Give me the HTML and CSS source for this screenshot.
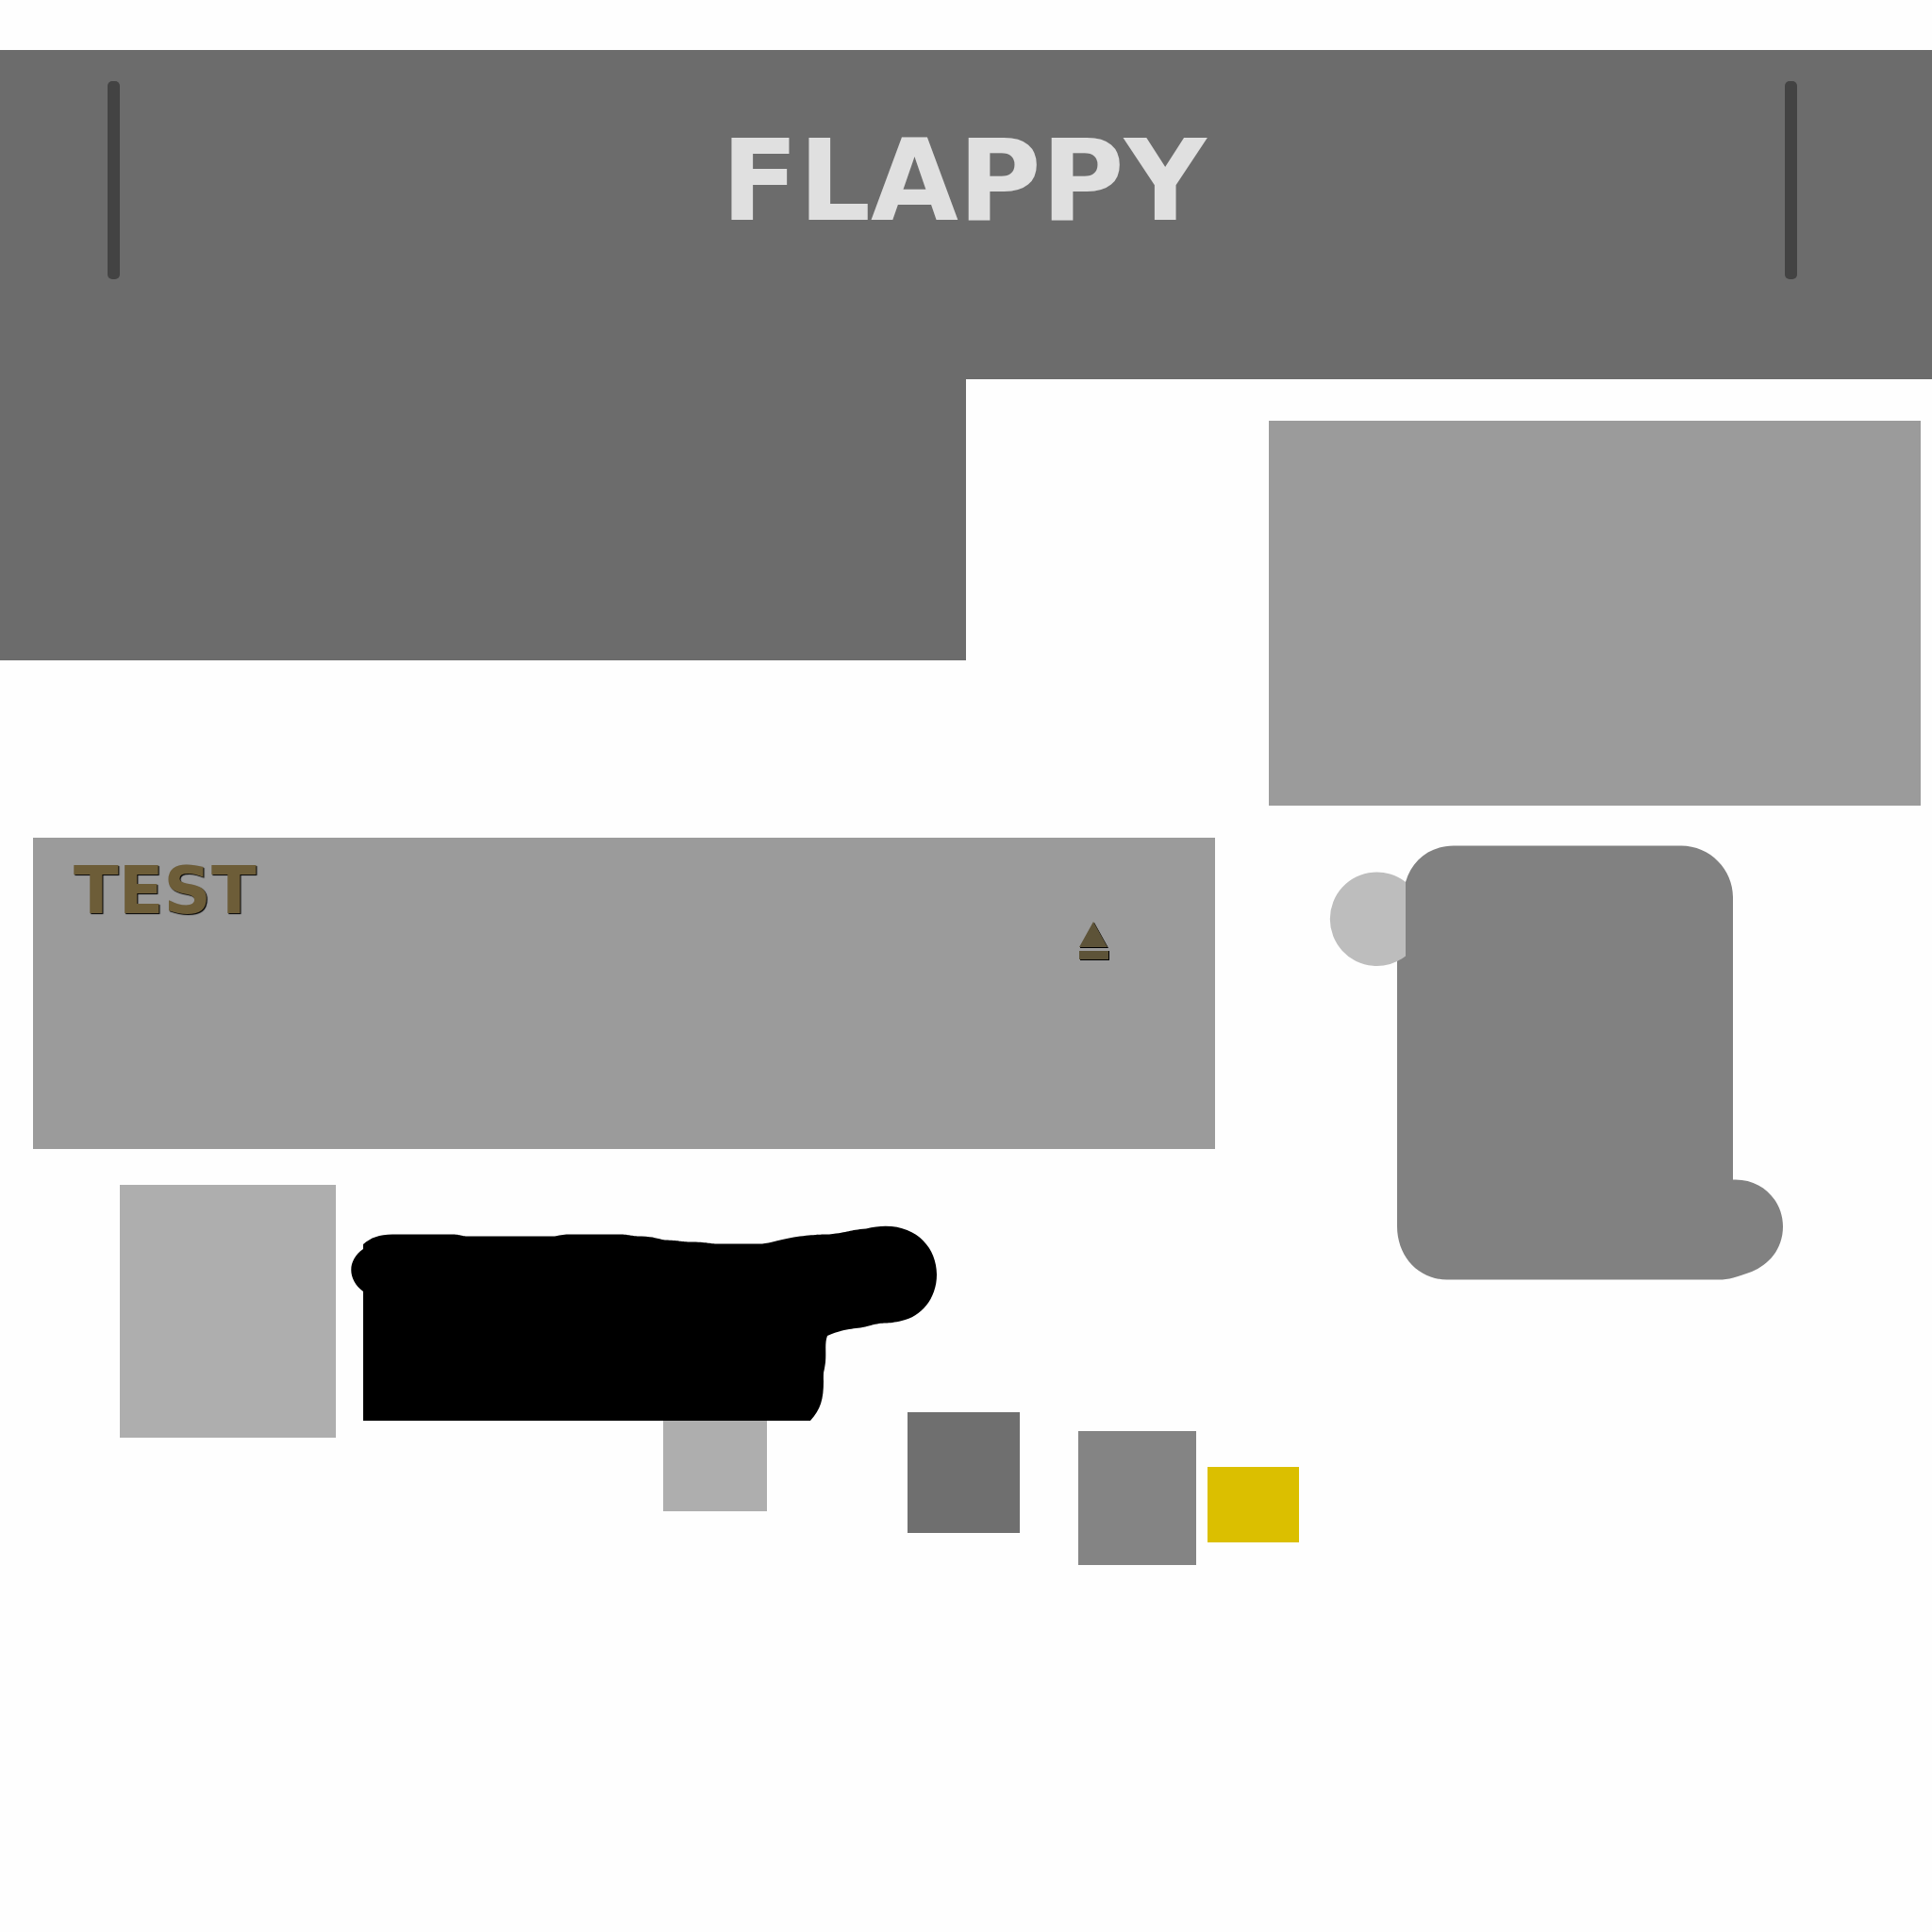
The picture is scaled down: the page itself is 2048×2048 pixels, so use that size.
FILE: index.html
```html
<!DOCTYPE html>
<html lang="en">
<head>
<meta charset="utf-8">
<title>Flappy</title>
<link rel="stylesheet" href="styles.css">
</head>
<body>
<header class="banner">
  <span class="post"></span>
  <h1 class="title">FLAPPY</h1>
  <span class="post"></span>
</header>
<main class="board">
  <section class="left">
    <div class="step"></div>
    <div class="panel deck">
      <h2 class="label">TEST</h2>
      <button class="eject" type="button" aria-label="Eject">
        <svg width="34" height="42" viewBox="0 0 34 42">
          <path fill="#000" d="M17 2 32 29H2v-1zM2 32H33V42H2z"/>
          <path fill="#5d5338" d="M16 1 31 28H1zM1 32H32V41H1z"/>
        </svg>
      </button>
    </div>
  </section>
  <section class="right">
    <div class="panel screen"></div>
    <svg class="scroll" width="484" height="462" viewBox="1408 896 484 462">
      <path fill="#818181" d="M1490 935C1497 911 1516 896.500 1541 896.500H1782C1813 896.500 1837 922 1837 951V1250.500C1868 1249 1890 1273 1890 1300C1890 1325 1874 1341 1857 1348C1841 1354 1832 1356.500 1822 1356.500H1534C1504 1356.500 1481 1332 1481 1300V1000H1490Z"/>
      <path fill="#bdbdbd" d="M1490 935A49.700 49.700 0 1 0 1490 1013.500Z"/>
    </svg>
  </section>
  <section class="swatches">
    <div class="swatch light-large"></div>
    <div class="ink">
      <svg class="blot" width="622" height="207" viewBox="372 1299 622 207">
        <path d="M385 1324V1319C393 1312 402 1308.500 416 1308.500H478C490 1308.500 487 1310.500 497 1310.500H588C596 1309 597 1308.500 606 1308.500H656C669 1308.500 667 1310.500 680 1310.500C694 1311 696 1313 705 1314.500C720 1315 720 1316 731 1316.500C751 1316.500 750 1318.500 762 1318.500H808C815 1318 830 1313 848 1310.500C867 1308.500 872 1308.500 879 1308.500C901 1306 899 1304 918 1302.500C965 1291 993 1319 993 1351C993 1377 976 1396 956 1400C940 1404 937 1401 923 1405C906 1410 901 1406 877 1416C874 1424 876 1432 875 1444C873 1459 873 1450 873 1464C873 1483 870 1494 859 1506H385V1369C368 1356 368 1336 385 1324Z"/>
      </svg>
      <div class="swatch light-small"></div>
    </div>
    <div class="swatch dark"></div>
    <div class="swatch mid"></div>
    <div class="swatch gold"></div>
  </section>
</main>
</body>
</html>
```
FILE: styles.css
```css
* { box-sizing: border-box; }

body {
  margin: 0;
  padding-top: 53px;
  background: #fefefe;
  font-family: "DejaVu Sans", sans-serif;
}

.banner {
  display: flex;
  justify-content: space-between;
  align-items: flex-start;
  height: 349px;
  padding: 33px 143px 0 114px;
  background: #6c6c6c;
}

.post {
  width: 13px;
  height: 210px;
  border-radius: 5px;
  background: #434343;
}

.title {
  margin: 34px 0 0 24px;
  color: #e0e0e0;
  font-size: 120px;
  line-height: 144px;
}

.board {
  display: grid;
  grid-template-columns: 1345fr 703fr;
  grid-template-rows: 854px auto;
}

.left { grid-area: 1 / 1; }

.step {
  width: 50vw;
  height: 298px;
  background: #6c6c6c;
}

.panel { background: #9b9b9b; }

.deck {
  display: flex;
  justify-content: space-between;
  align-items: flex-start;
  height: 330px;
  margin: 188px 57px 0 35px;
  padding: 16px 111px 0 43px;
}

.label {
  margin: 0;
  color: #6d5d38;
  font-size: 70px;
  line-height: 80px;
  text-shadow: 1px 1px 1px #000;
}

.eject {
  margin-top: 72px;
  padding: 0;
  border: 0;
  background: none;
}

.eject svg { display: block; }

.right { grid-area: 1 / 2 / 3 / 3; }

.screen {
  height: 408px;
  margin: 44px 12px 0 0;
}

.scroll {
  display: block;
  margin: 42px 0 0 63px;
}

.swatches {
  grid-area: 2 / 1 / 3 / 3;
  display: flex;
  align-items: flex-start;
  padding-left: 127px;
}

.swatch { flex: none; }

.light-large {
  width: 229px;
  height: 268px;
  background: #aeaeae;
}

.ink {
  flex: none;
  width: 590px;
  margin: 43px 0 0 16px;
}

.blot {
  display: block;
  overflow: visible;
}

.light-small {
  width: 110px;
  height: 96px;
  margin-left: 331px;
  background: #aeaeae;
}

.dark {
  width: 119px;
  height: 128px;
  margin-top: 241px;
  background: #6f6f6f;
}

.mid {
  width: 125px;
  height: 142px;
  margin: 261px 12px 0 62px;
  background: #848484;
}

.gold {
  width: 97px;
  height: 80px;
  margin-top: 299px;
  background: #dbbf00;
}
```
